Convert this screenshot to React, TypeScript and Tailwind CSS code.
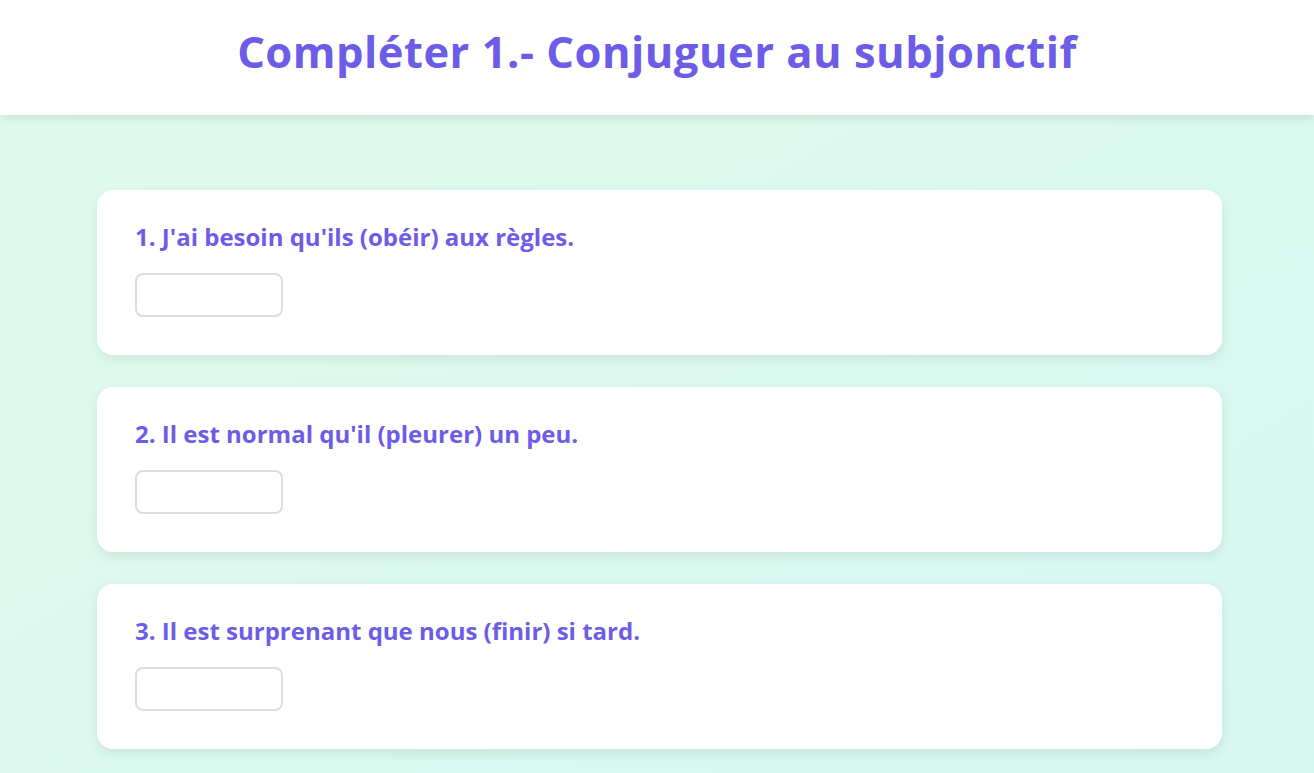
import React from "react";

const questions = [
  "1. J'ai besoin qu'ils (obéir) aux règles.",
  "2. Il est normal qu'il (pleurer) un peu.",
  "3. Il est surprenant que nous (finir) si tard.",
];

export default function App() {
  return (
    <div
      className="min-h-[773px] bg-gradient-to-br from-[#dffbec] to-[#d6f6f0]"
      style={{ fontFamily: '"Open Sans", "Noto Sans", sans-serif' }}
    >
      <header className="h-[115px] bg-white flex items-center justify-center pb-[12px] shadow-[0_2px_10px_rgba(0,0,0,0.12)] relative">
        <h1 className="text-[43.5px] font-bold text-[#6c5ce7] tracking-[0.5px] leading-none">
          Compléter 1.- Conjuguer au subjonctif
        </h1>
      </header>
      <main className="flex flex-col gap-[32px] pt-[75px] pl-[97px] pr-[92px] pb-[40px]">
        {questions.map((q) => (
          <div
            key={q}
            className="bg-white rounded-[16px] px-[38px] pt-[32px] pb-[38px] shadow-[0_4px_12px_rgba(0,0,0,0.08)]"
          >
            <p className="text-[24px] font-bold text-[#6c5ce7] leading-[30px]">{q}</p>
            <input
              type="text"
              className="mt-[21px] block w-[148px] h-[44px] border-2 border-[#dddddd] rounded-[8px] outline-none px-2"
            />
          </div>
        ))}
      </main>
    </div>
  );
}
